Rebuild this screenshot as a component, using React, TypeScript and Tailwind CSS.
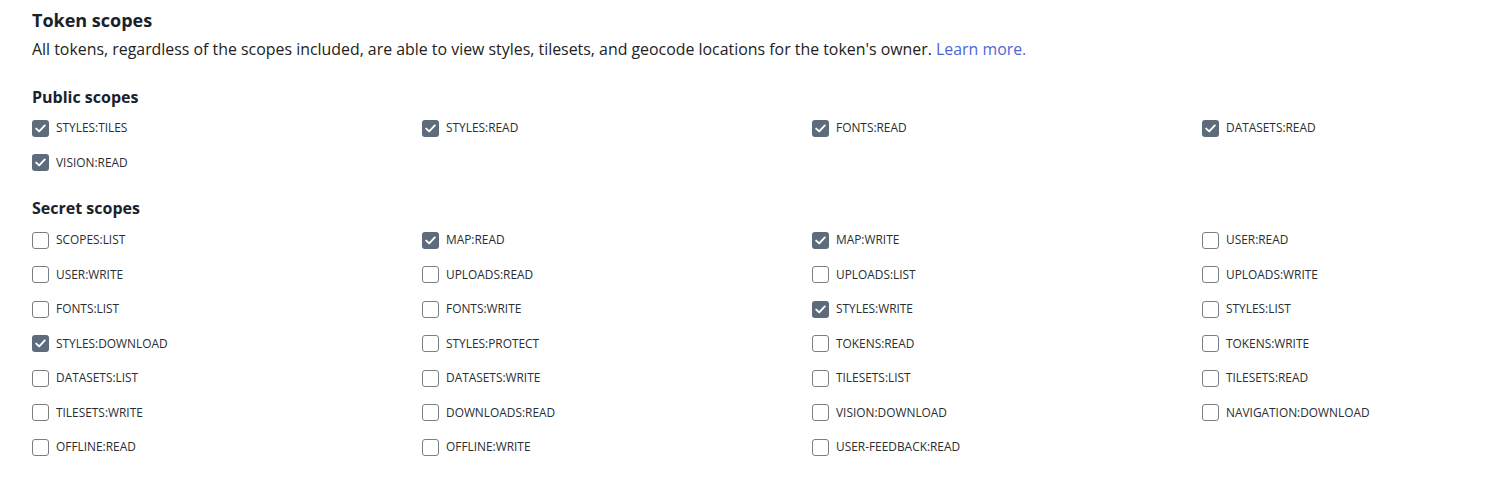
import React from "react";

const publicScopes: [string, boolean][] = [
  ["STYLES:TILES", true],
  ["STYLES:READ", true],
  ["FONTS:READ", true],
  ["DATASETS:READ", true],
  ["VISION:READ", true],
];

const secretScopes: [string, boolean][] = [
  ["SCOPES:LIST", false],
  ["MAP:READ", true],
  ["MAP:WRITE", true],
  ["USER:READ", false],
  ["USER:WRITE", false],
  ["UPLOADS:READ", false],
  ["UPLOADS:LIST", false],
  ["UPLOADS:WRITE", false],
  ["FONTS:LIST", false],
  ["FONTS:WRITE", false],
  ["STYLES:WRITE", true],
  ["STYLES:LIST", false],
  ["STYLES:DOWNLOAD", true],
  ["STYLES:PROTECT", false],
  ["TOKENS:READ", false],
  ["TOKENS:WRITE", false],
  ["DATASETS:LIST", false],
  ["DATASETS:WRITE", false],
  ["TILESETS:LIST", false],
  ["TILESETS:READ", false],
  ["TILESETS:WRITE", false],
  ["DOWNLOADS:READ", false],
  ["VISION:DOWNLOAD", false],
  ["NAVIGATION:DOWNLOAD", false],
  ["OFFLINE:READ", false],
  ["OFFLINE:WRITE", false],
  ["USER-FEEDBACK:READ", false],
];

function Box({ checked }: { checked: boolean }) {
  if (checked) {
    return (
      <span className="flex h-[17px] w-[17px] shrink-0 items-center justify-center rounded-[3px] bg-[#5d6b7b]">
        <svg width="11" height="9" viewBox="0 0 11 9" fill="none">
          <path d="M1.2 4.6 L4.2 7.4 L9.8 1.4" stroke="white" strokeWidth="1.9" strokeLinecap="round" strokeLinejoin="round" />
        </svg>
      </span>
    );
  }
  return <span className="h-[17px] w-[17px] shrink-0 rounded-[3px] border border-[#7b7f84] bg-white" />;
}

function Item({ label, checked }: { label: string; checked: boolean }) {
  return (
    <label className="flex h-[34.5px] items-center gap-[7px]">
      <Box checked={checked} />
      <span className="text-[11.9px] leading-none text-[#2a2d31]">{label}</span>
    </label>
  );
}

export default function App() {
  return (
    <div
      className="min-h-[489px] bg-white pl-[32px] pt-[8px] text-[#1f2328]"
      style={{ fontFamily: '"Open Sans", "Noto Sans", sans-serif' }}
    >
      <h2 className="text-[18px] font-bold leading-[24px] text-[#18222c]">Token scopes</h2>
      <p className="mt-[5px] text-[15.9px] leading-[24px] text-[#222]">
        All tokens, regardless of the scopes included, are able to view styles, tilesets, and geocode locations for the token's owner.{" "}
        <a className="text-[#4d66d6]">Learn more.</a>
      </p>
      <h3 className="mt-[25px] text-[16px] font-bold leading-[22px] text-[#18222c]">Public scopes</h3>
      <div className="mt-[3px] grid grid-cols-[390px_390px_390px_200px]">
        {publicScopes.map(([l, c]) => (
          <Item key={l} label={l} checked={c} />
        ))}
      </div>
      <h3 className="mt-[17px] text-[16px] font-bold leading-[22px] text-[#18222c]">Secret scopes</h3>
      <div className="mt-[4px] grid grid-cols-[390px_390px_390px_200px]">
        {secretScopes.map(([l, c]) => (
          <Item key={l} label={l} checked={c} />
        ))}
      </div>
    </div>
  );
}
